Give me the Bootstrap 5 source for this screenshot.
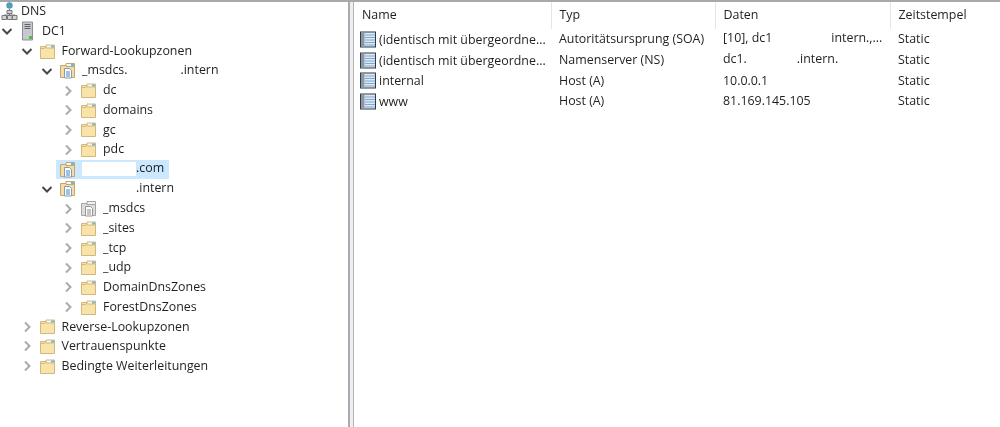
<!DOCTYPE html>
<html lang="de">
<head>
  <meta charset="UTF-8">
  <title>DNS-Manager</title>
  <meta name="viewport" content="width=device-width, initial-scale=1">
  <link href="https://cdn.jsdelivr.net/npm/bootstrap@5.3.0/dist/css/bootstrap.min.css" rel="stylesheet">
  <style>
    html, body { height: 100%; overflow: hidden; }
    body { background: #fff; color: #1f1f1f; font-family: "Open Sans", "Noto Sans", sans-serif; font-size: 12.4px; line-height: 1; }
    .mmc-app { height: 427px; border-top: 2px solid #a9a9a9; filter: blur(.35px); }
    .tree-pane { width: 348px; flex: none; }
    .pane-split { width: 6px; flex: none; background: #eeeef0; border-left: 2px solid #aaaab0; border-right: 1px solid #b4b4b8; }
    .list-pane { flex: 1 1 auto; min-width: 0; }

    .tree-row { height: 19.7px; white-space: nowrap; }
    .tree-row:first-child { margin-top: -2px; height: 21.6px; padding-top: 1px; }
    .lvl-1 { padding-left: 19.5px; }
    .lvl-2 { padding-left: 40px; }
    .lvl-3 { padding-left: 61px; }
    .twist { width: 14px; height: 14px; flex: none; margin-right: 5px; }
    .tree-icon { width: 17px; height: 17px; flex: none; margin-right: 5px; }
    .srv-icon { height: 20px; margin-top: -2px; margin-bottom: -2px; }
    .root-icon { width: 17px; height: 19px; flex: none; margin: 0 2px 0 1px; }
    .tree-label { padding: 3px 4px 3px 1px; }
    .sel-wrap { background: #cce8ff; margin-left: -3px; padding-left: 3px; height: 19px; width: 113px; }
    .gap-mask { display: inline-block; height: 14px; background: #fff; vertical-align: middle; }
    .gap-mask-a { width: 53px; }
    .gap-mask-b { width: 54px; }
    .gap-mask-c { width: 54px; }
    .gap-mask-d { width: 59px; }
    .gap-mask-e { width: 50px; }

    .rec-table { table-layout: fixed; width: 646px; margin: 0; color: #1f1f1f; --bs-table-border-color: transparent; }
    .rec-table th, .rec-table td { padding: 0 0 0 8px; font-weight: 400; font-size: 12.4px; white-space: nowrap; overflow: hidden; vertical-align: middle; }
    .rec-table th { height: 27px; border-right: 1px solid #e5e5e5; padding-bottom: 1px; }
    .rec-table th:last-child { border-right: 0; }
    .rec-table td { height: 20.7px; }
    .rec-table td:first-child { padding-left: 6px; }
    .rec-icon { width: 16px; height: 17px; margin-right: 3px; vertical-align: -4px; }
  </style>
</head>
<body>
  <!-- icon sheet -->
  <svg width="0" height="0" class="position-absolute">
    <defs>
      <symbol id="i-open" viewBox="0 0 14 14"><path d="M2.500 5l4.500 4.500L11.500 5" fill="none" stroke="#484848" stroke-width="2"/></symbol>
      <symbol id="i-closed" viewBox="0 0 14 14"><path d="M5 2.500L9.500 7 5 11.500" fill="none" stroke="#ababab" stroke-width="2"/></symbol>
      <symbol id="i-folder" viewBox="0 0 17 17">
        <path d="M1.500 3.500h14v12h-14z" fill="#f8e3a8" stroke="#d2b87e"/>
        <path d="M1.500 5.500h4l1.500-2" fill="none" stroke="#d2b87e"/>
        <path d="M7 2h8.500v3H7z" fill="#fdf8e6" stroke="#d2b87e"/>
        <path d="M12 2.500h3v2h-3z" fill="#6fb5e0"/>
      </symbol>
      <symbol id="i-zone" viewBox="0 0 17 17">
        <path d="M1.500 3.500h14v12h-14z" fill="#f3dca6" stroke="#bfa877"/>
        <path d="M7 1.500h8.500v3H7z" fill="#fdf6e0" stroke="#bfa877"/>
        <path d="M12 2h3v2h-3z" fill="#6fb5e0"/>
        <path d="M5.500 6.500h5l2 2v7.500h-7z" fill="#fff" stroke="#8c99a8"/>
        <path d="M7 10h4M7 12h4M7 14h4" stroke="#3f86c6"/>
      </symbol>
      <symbol id="i-zone-grey" viewBox="0 0 17 17">
        <path d="M1.500 3.500h14v12h-14z" fill="#dcdcdc" stroke="#a5a5a5"/>
        <path d="M7 1.500h8.500v3H7z" fill="#f1f1f1" stroke="#a5a5a5"/>
        <path d="M5.500 6.500h5l2 2v7.500h-7z" fill="#fff" stroke="#969696"/>
        <path d="M7 10h4M7 12h4M7 14h4" stroke="#8a8a8a"/>
      </symbol>
      <symbol id="i-rec" viewBox="0 0 16 17">
        <rect x=".5" y="1" width="15" height="15" fill="#dfe9f3" stroke="#2f3a4d"/>
        <rect x="1" y="1.500" width="3.500" height="14" fill="#8d97a3"/>
        <path d="M5 4h10M5 6.500h10M5 9h10M5 11.500h10M5 14h10" stroke="#7fa8cf"/>
      </symbol>
      <symbol id="i-dns" viewBox="0 0 17 19">
        <circle cx="8.500" cy="3.500" r="3.200" fill="#4a9bd4"/>
        <path d="M6.500 2l3 1-1 3z" fill="#6ab04c"/>
        <path d="M8.500 7v6M3 13h11" stroke="#7a7a7a" fill="none"/>
        <path d="M6 8.500h5v3H6zM1 13.500h4.500v4H1zM6.500 13.500H11v4H6.500zM11.500 13.500H16v4h-4.500z" fill="#d4d4d4" stroke="#777"/>
      </symbol>
      <symbol id="i-server" viewBox="0 0 17 20">
        <path d="M3.500 1h10v18h-10z" fill="#c6c9cd" stroke="#8b8f95"/>
        <path d="M5.500 3.500h6M5.500 5.500h6M5.500 7.500h6" stroke="#5f6369"/>
        <rect x="10" y="15" width="3" height="3" fill="#58b947"/>
      </symbol>
    </defs>
  </svg>

  <div class="mmc-app d-flex">
    <!-- scope tree -->
    <div class="tree-pane">
      <div class="tree-row d-flex align-items-center"><svg class="root-icon"><use href="#i-dns"/></svg><span class="tree-label">DNS</span></div>
      <div class="tree-row d-flex align-items-center"><svg class="twist"><use href="#i-open"/></svg><svg class="tree-icon srv-icon"><use href="#i-server"/></svg><span class="tree-label">DC1</span></div>
      <div class="tree-row lvl-1 d-flex align-items-center"><svg class="twist"><use href="#i-open"/></svg><svg class="tree-icon"><use href="#i-folder"/></svg><span class="tree-label">Forward-Lookupzonen</span></div>
      <div class="tree-row lvl-2 d-flex align-items-center"><svg class="twist"><use href="#i-open"/></svg><svg class="tree-icon"><use href="#i-zone"/></svg><span class="tree-label">_msdcs.<span class="gap-mask gap-mask-a"></span>.intern</span></div>
      <div class="tree-row lvl-3 d-flex align-items-center"><svg class="twist"><use href="#i-closed"/></svg><svg class="tree-icon"><use href="#i-folder"/></svg><span class="tree-label">dc</span></div>
      <div class="tree-row lvl-3 d-flex align-items-center"><svg class="twist"><use href="#i-closed"/></svg><svg class="tree-icon"><use href="#i-folder"/></svg><span class="tree-label">domains</span></div>
      <div class="tree-row lvl-3 d-flex align-items-center"><svg class="twist"><use href="#i-closed"/></svg><svg class="tree-icon"><use href="#i-folder"/></svg><span class="tree-label">gc</span></div>
      <div class="tree-row lvl-3 d-flex align-items-center"><svg class="twist"><use href="#i-closed"/></svg><svg class="tree-icon"><use href="#i-folder"/></svg><span class="tree-label">pdc</span></div>
      <div class="tree-row lvl-2 d-flex align-items-center"><span class="twist"></span><div class="sel-wrap d-flex align-items-center"><svg class="tree-icon"><use href="#i-zone"/></svg><span class="tree-label"><span class="gap-mask gap-mask-b"></span>.com</span></div></div>
      <div class="tree-row lvl-2 d-flex align-items-center"><svg class="twist"><use href="#i-open"/></svg><svg class="tree-icon"><use href="#i-zone"/></svg><span class="tree-label"><span class="gap-mask gap-mask-c"></span>.intern</span></div>
      <div class="tree-row lvl-3 d-flex align-items-center"><svg class="twist"><use href="#i-closed"/></svg><svg class="tree-icon"><use href="#i-zone-grey"/></svg><span class="tree-label">_msdcs</span></div>
      <div class="tree-row lvl-3 d-flex align-items-center"><svg class="twist"><use href="#i-closed"/></svg><svg class="tree-icon"><use href="#i-folder"/></svg><span class="tree-label">_sites</span></div>
      <div class="tree-row lvl-3 d-flex align-items-center"><svg class="twist"><use href="#i-closed"/></svg><svg class="tree-icon"><use href="#i-folder"/></svg><span class="tree-label">_tcp</span></div>
      <div class="tree-row lvl-3 d-flex align-items-center"><svg class="twist"><use href="#i-closed"/></svg><svg class="tree-icon"><use href="#i-folder"/></svg><span class="tree-label">_udp</span></div>
      <div class="tree-row lvl-3 d-flex align-items-center"><svg class="twist"><use href="#i-closed"/></svg><svg class="tree-icon"><use href="#i-folder"/></svg><span class="tree-label">DomainDnsZones</span></div>
      <div class="tree-row lvl-3 d-flex align-items-center"><svg class="twist"><use href="#i-closed"/></svg><svg class="tree-icon"><use href="#i-folder"/></svg><span class="tree-label">ForestDnsZones</span></div>
      <div class="tree-row lvl-1 d-flex align-items-center"><svg class="twist"><use href="#i-closed"/></svg><svg class="tree-icon"><use href="#i-folder"/></svg><span class="tree-label">Reverse-Lookupzonen</span></div>
      <div class="tree-row lvl-1 d-flex align-items-center"><svg class="twist"><use href="#i-closed"/></svg><svg class="tree-icon"><use href="#i-folder"/></svg><span class="tree-label">Vertrauenspunkte</span></div>
      <div class="tree-row lvl-1 d-flex align-items-center"><svg class="twist"><use href="#i-closed"/></svg><svg class="tree-icon"><use href="#i-folder"/></svg><span class="tree-label">Bedingte Weiterleitungen</span></div>
    </div>

    <div class="pane-split"></div>

    <!-- result list -->
    <div class="list-pane">
      <table class="table table-borderless rec-table">
        <colgroup><col style="width:197px"><col style="width:164px"><col style="width:175px"><col style="width:110px"></colgroup>
        <thead>
          <tr><th>Name</th><th>Typ</th><th>Daten</th><th>Zeitstempel</th></tr>
        </thead>
        <tbody>
          <tr><td><svg class="rec-icon"><use href="#i-rec"/></svg>(identisch mit übergeordne...</td><td>Autoritätsursprung (SOA)</td><td>[10], dc1<span class="gap-mask gap-mask-d"></span>intern.,...</td><td>Static</td></tr>
          <tr><td><svg class="rec-icon"><use href="#i-rec"/></svg>(identisch mit übergeordne...</td><td>Namenserver (NS)</td><td>dc1.<span class="gap-mask gap-mask-e"></span>.intern.</td><td>Static</td></tr>
          <tr><td><svg class="rec-icon"><use href="#i-rec"/></svg>internal</td><td>Host (A)</td><td>10.0.0.1</td><td>Static</td></tr>
          <tr><td><svg class="rec-icon"><use href="#i-rec"/></svg>www</td><td>Host (A)</td><td>81.169.145.105</td><td>Static</td></tr>
        </tbody>
      </table>
    </div>
  </div>
  <script src="https://cdn.jsdelivr.net/npm/bootstrap@5.3.0/dist/js/bootstrap.bundle.min.js"></script>
</body>
</html>
